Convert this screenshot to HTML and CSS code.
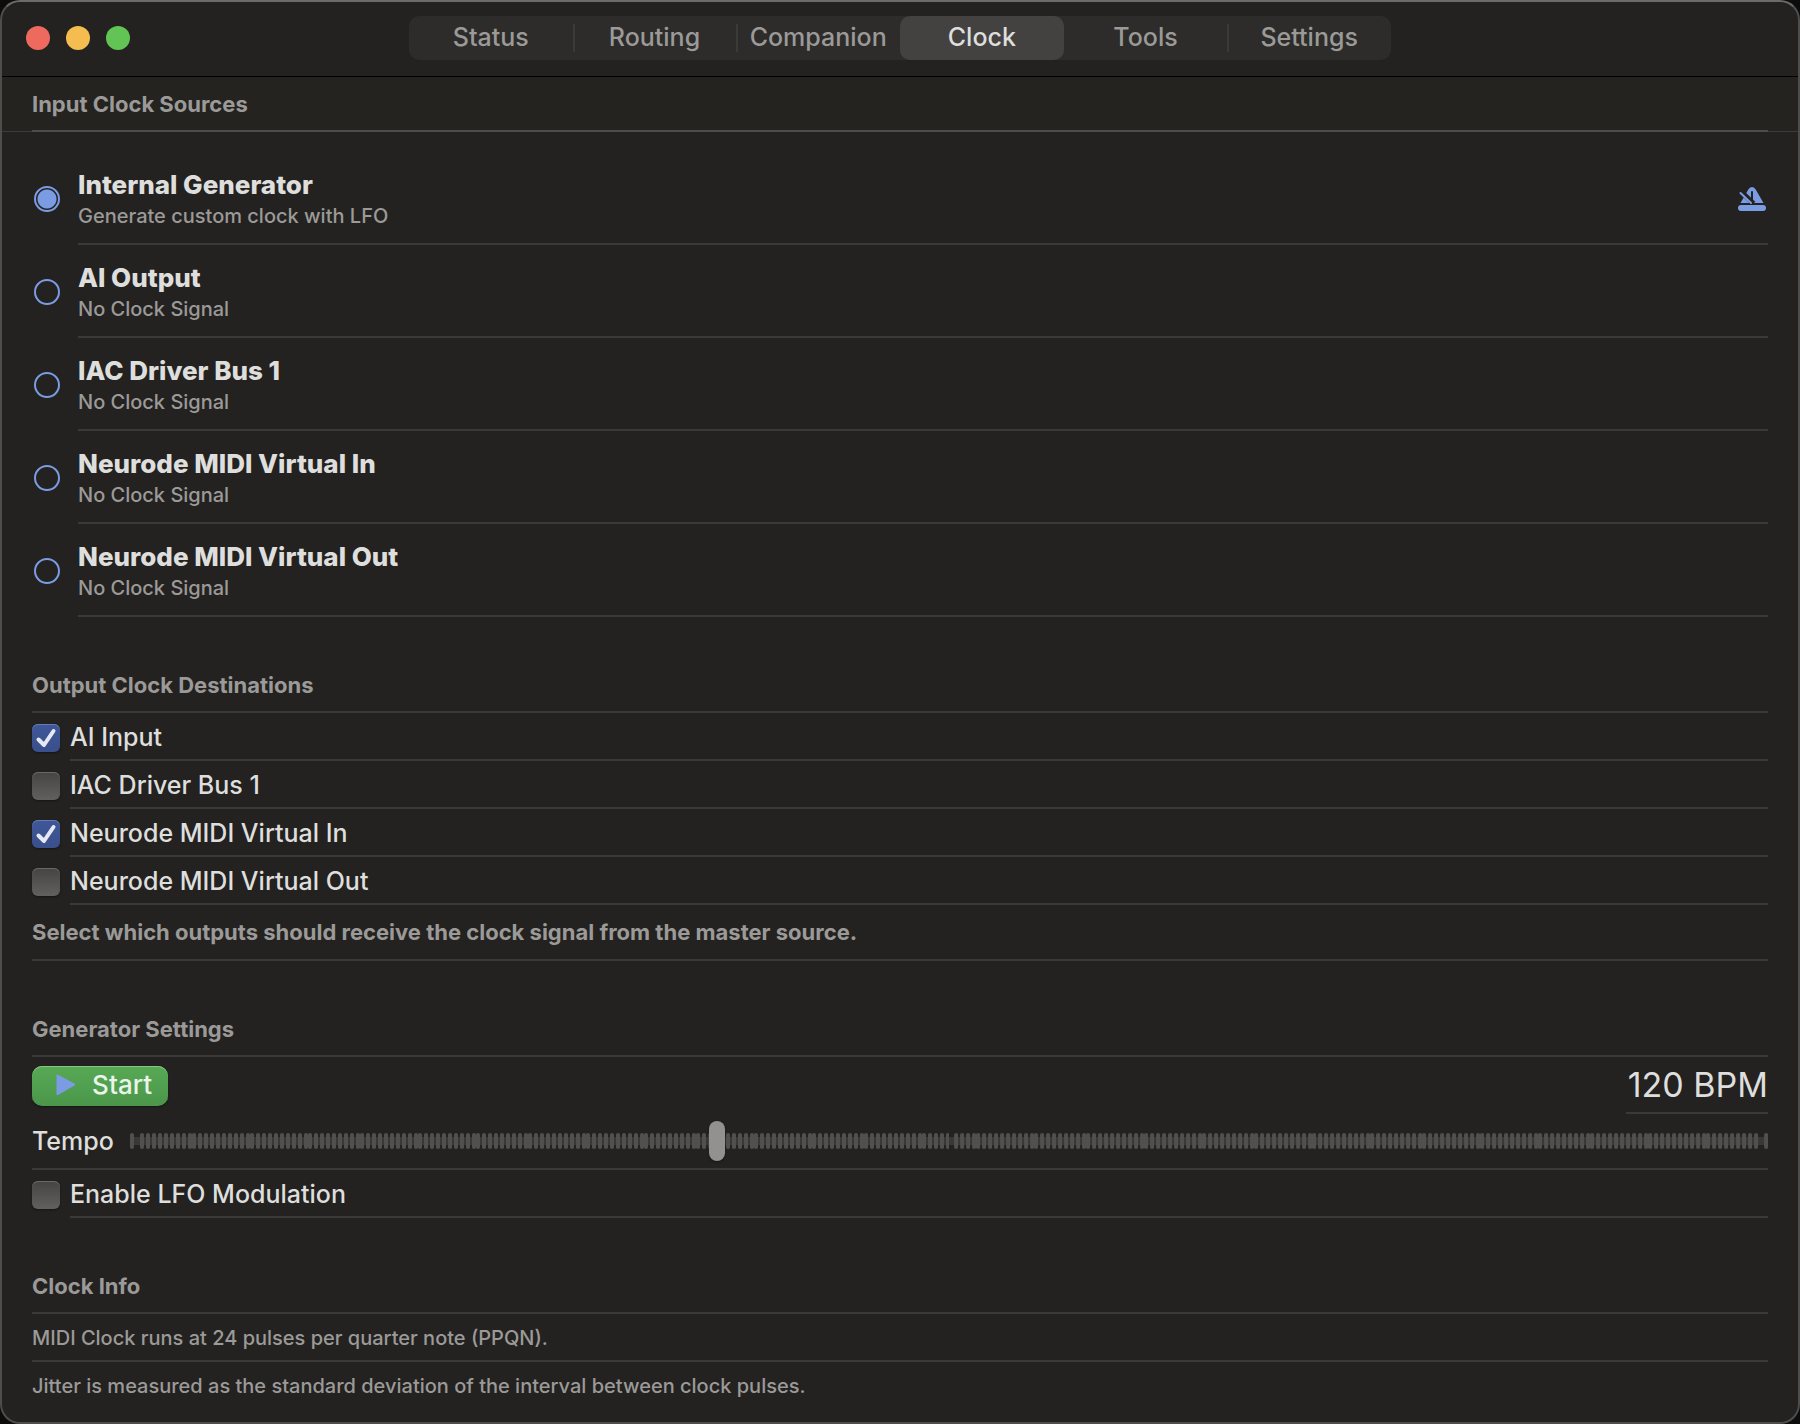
FILE: index.html
```html
<!DOCTYPE html>
<html lang="en">
<head>
<meta charset="utf-8">
<title>Clock</title>
<link rel="stylesheet" href="styles.css">
</head>
<body>
<div class="window">
  <header class="titlebar">
    <div class="lights">
      <button class="light close" aria-label="Close"></button>
      <button class="light minimize" aria-label="Minimize"></button>
      <button class="light expand" aria-label="Zoom"></button>
    </div>
    <nav class="tabs">
      <button class="tab">Status</button>
      <button class="tab divided">Routing</button>
      <button class="tab divided">Companion</button>
      <button class="tab selected" aria-current="page">Clock</button>
      <button class="tab">Tools</button>
      <button class="tab divided">Settings</button>
    </nav>
  </header>

  <main>
    <section>
      <div class="pinned"><h2 class="heading">Input Clock Sources</h2></div>
      <div class="sources">
        <div class="source">
          <input type="radio" name="source" id="src-gen" class="radio" checked>
          <div class="source-body">
            <label for="src-gen"><span class="name">Internal Generator</span><span class="detail">Generate custom clock with LFO</span></label>
            <svg class="metronome" viewBox="0 0 28 26" aria-hidden="true">
              <path d="M2.500 17 L10 4 Q11.500 1 14 1 Q16.500 1 18 4 L25.500 17 Z"/>
              <path class="cut slit" d="M14 6 V17"/>
              <path class="cut" d="M1 3.500 L15.500 17.500"/>
              <path class="stroke" d="M2.500 7 L13 17"/>
              <rect x="0" y="19" width="28" height="6" rx="3"/>
            </svg>
          </div>
        </div>
        <div class="source">
          <input type="radio" name="source" id="src-ai" class="radio">
          <div class="source-body"><label for="src-ai"><span class="name">AI Output</span><span class="detail">No Clock Signal</span></label></div>
        </div>
        <div class="source">
          <input type="radio" name="source" id="src-iac" class="radio">
          <div class="source-body"><label for="src-iac"><span class="name">IAC Driver Bus 1</span><span class="detail">No Clock Signal</span></label></div>
        </div>
        <div class="source">
          <input type="radio" name="source" id="src-in" class="radio">
          <div class="source-body"><label for="src-in"><span class="name">Neurode MIDI Virtual In</span><span class="detail">No Clock Signal</span></label></div>
        </div>
        <div class="source">
          <input type="radio" name="source" id="src-out" class="radio">
          <div class="source-body"><label for="src-out"><span class="name">Neurode MIDI Virtual Out</span><span class="detail">No Clock Signal</span></label></div>
        </div>
      </div>
    </section>

    <section class="group">
      <h2 class="heading">Output Clock Destinations</h2>
      <div class="check-row">
        <span class="check"><input type="checkbox" id="dst-ai" checked><svg viewBox="0 0 28 28" aria-hidden="true"><path d="M6.500 15.500 L12 21 L21.500 7"/></svg></span>
        <label for="dst-ai">AI Input</label>
      </div>
      <div class="check-row">
        <span class="check"><input type="checkbox" id="dst-iac"></span>
        <label for="dst-iac">IAC Driver Bus 1</label>
      </div>
      <div class="check-row">
        <span class="check"><input type="checkbox" id="dst-in" checked><svg viewBox="0 0 28 28" aria-hidden="true"><path d="M6.500 15.500 L12 21 L21.500 7"/></svg></span>
        <label for="dst-in">Neurode MIDI Virtual In</label>
      </div>
      <div class="check-row">
        <span class="check"><input type="checkbox" id="dst-out"></span>
        <label for="dst-out">Neurode MIDI Virtual Out</label>
      </div>
      <p class="note">Select which outputs should receive the clock signal from the master source.</p>
    </section>

    <section class="group">
      <h2 class="heading">Generator Settings</h2>
      <div class="transport">
        <button class="start">
          <svg viewBox="0 0 20 22" aria-hidden="true"><path d="M1.500 0.500 L18.500 9.500 Q20 10.500 18.500 11.500 L2 21 Q0.500 21.500 0.500 20 V1.500 Q0.500 0 1.500 0.500 Z"/></svg>
          <span>Start</span>
        </button>
        <output class="bpm" for="tempo">120 BPM</output>
      </div>
      <div class="tempo">
        <label for="tempo">Tempo</label>
        <div class="slider">
          <div class="ticks" aria-hidden="true">
            <svg class="half">
              <defs>
                <pattern id="tick-marks" x="58" y="0" width="168" height="16" patternUnits="userSpaceOnUse">
                  <path class="tick" d="M2 2v12M6 2v12M12 2v12M18 2v12M24 2v12M30 2v12M36 2v12M42 2v12M48 2v12M54 2v12M60 2v12M64 2v12M70 2v12M76 2v12M82 2v12M88 2v12M94 2v12M100 2v12M106 2v12M112 2v12M118 2v12M122 2v12M128 2v12M134 2v12M140 2v12M146 2v12M152 2v12M158 2v12M164 2v12"/>
                </pattern>
              </defs>
              <path class="tick" d="M2 2v12"/>
              <rect class="marks" x="10" width="100%" height="16" fill="url(#tick-marks)"/>
            </svg>
            <svg class="half mirrored">
              <path class="tick" d="M2 2v12"/>
              <rect class="marks short" x="10" height="16" fill="url(#tick-marks)"/>
            </svg>
          </div>
          <input type="range" id="tempo" min="20" max="300" value="120">
        </div>
      </div>
      <div class="check-row">
        <span class="check"><input type="checkbox" id="lfo"></span>
        <label for="lfo">Enable LFO Modulation</label>
      </div>
    </section>

    <section class="group">
      <h2 class="heading">Clock Info</h2>
      <p class="info">MIDI Clock runs at 24 pulses per quarter note (PPQN).</p>
      <p class="info">Jitter is measured as the standard deviation of the interval between clock pulses.</p>
    </section>
  </main>
</div>
</body>
</html>
```
FILE: styles.css
```css
:root {
  --bg: #232220;
  --line: #3a3937;
  --text: #dededd;
  --muted: #9b9a98;
  --accent: #7b9ce3;
}

* { box-sizing: border-box; }

body {
  margin: 0;
  background: #0c0c0c;
  color: var(--text);
  font: 450 25px/32px Inter, "Liberation Sans", sans-serif;
}

h2, p { margin: 0; }
button, input { font: inherit; margin: 0; }

.window {
  min-height: 100vh;
  padding-bottom: 12px;
  background: var(--bg);
  border: 2px solid #4e4d4c;
  border-top-color: #6c6b6a;
  border-radius: 20px;
  overflow: hidden;
}

.titlebar {
  display: grid;
  grid-template-columns: 1fr minmax(0, 982px) 1fr;
  align-items: center;
  height: 75px;
  padding: 0 24px 2px;
  border-bottom: 1px solid #000;
}

.lights { display: flex; gap: 16px; }
.light {
  width: 24px;
  height: 24px;
  padding: 0;
  border: 0;
  border-radius: 50%;
}
.close { background: #ee6a5f; }
.minimize { background: #f5bd4f; }
.expand { background: #61c454; }

.tabs {
  display: grid;
  grid-template-columns: repeat(6, 1fr);
  height: 44px;
  border-radius: 10px;
  background: #2d2c2a;
}
.tab {
  display: flex;
  align-items: center;
  justify-content: center;
  padding: 0 0 2px;
  border: 0;
  background: none;
  color: var(--muted);
}
.divided {
  background: linear-gradient(#3b3a38, #3b3a38) left center / 2px 28px no-repeat;
}
.selected {
  border-radius: 10px;
  background: #434240;
  color: var(--text);
}

.pinned {
  padding: 0 30px;
  background: #24231f;
  box-shadow: inset 0 -1px #3c3b37;
}
.heading {
  height: 55px;
  border-bottom: 2px solid var(--line);
  color: var(--muted);
  font-size: 22px;
  font-weight: 700;
  line-height: 54px;
}
.pinned .heading { border-color: #4d4c49; }

.sources { padding: 20px 30px 0; }
.source {
  display: flex;
  align-items: center;
  gap: 18px;
  padding-left: 2px;
}
.source-body {
  flex: 1;
  display: flex;
  align-items: center;
  justify-content: space-between;
  height: 93px;
  padding: 2px 2px 0 0;
  border-bottom: 2px solid var(--line);
}
.source-body label { padding-top: 2px; }
.name, .detail { display: block; }
.name { font-size: 26px; font-weight: 800; line-height: 32px; }
.detail { color: var(--muted); font-size: 20px; font-weight: 500; line-height: 30px; }
.metronome { width: 28px; height: 26px; fill: var(--accent); }
.metronome .stroke { fill: none; stroke: var(--accent); stroke-width: 2; stroke-linecap: round; }
.metronome .cut { fill: none; stroke: var(--bg); stroke-width: 5; }
.metronome .slit { stroke-width: 2; stroke-linecap: round; }

.radio {
  appearance: none;
  width: 26px;
  height: 26px;
  border: 2px solid var(--accent);
  border-radius: 50%;
}
.radio:checked {
  background: radial-gradient(circle, var(--accent) 9px, transparent 10px);
}

.group { padding: 41px 30px 0; }

.check-row { display: flex; gap: 10px; height: 48px; }
.check-row label {
  flex: 1;
  border-bottom: 2px solid var(--line);
  line-height: 48px;
}
.check { display: grid; width: 28px; height: 28px; margin-top: 11px; }
.check > * { grid-area: 1 / 1; }
.check input {
  appearance: none;
  width: 28px;
  height: 28px;
  border-radius: 6px;
  background: linear-gradient(#454442, #61605e);
  box-shadow: inset 0 1px #6a6967, 0 1px 2px #151514;
}
.check input:checked {
  background: linear-gradient(#3f5798, #3a508c);
  box-shadow: inset 0 1px #667bb5, 0 1px 2px #151514;
}
.check svg {
  fill: none;
  stroke: #e6e9f3;
  stroke-width: 4;
  stroke-linecap: round;
  stroke-linejoin: round;
  pointer-events: none;
}

.note {
  height: 56px;
  border-bottom: 2px solid var(--line);
  color: var(--muted);
  font-size: 22px;
  font-weight: 700;
  line-height: 54px;
}

.transport {
  display: flex;
  align-items: flex-start;
  justify-content: space-between;
  height: 57px;
}
.start {
  display: flex;
  align-items: center;
  justify-content: space-between;
  width: 136px;
  height: 40px;
  margin-top: 9px;
  padding: 0 16px 2px 24px;
  border: 0;
  border-radius: 10px;
  background: linear-gradient(#57a955, #4b964a);
  box-shadow: inset 0 1px #8ac588, 0 1px 2px #151514;
  color: #eaf4ea;
  font-size: 26px;
}
.start svg { width: 20px; height: 22px; fill: var(--accent); }
.bpm {
  height: 57px;
  padding-left: 2px;
  border-bottom: 2px solid var(--line);
  font-size: 34px;
  font-weight: 400;
  line-height: 56px;
}

.tempo {
  display: flex;
  align-items: center;
  gap: 16px;
  height: 56px;
  border-bottom: 2px solid var(--line);
}
.slider { flex: 1; display: grid; align-items: center; }
.slider > * { grid-area: 1 / 1; }
.ticks {
  display: flex;
  height: 16px;
  background: linear-gradient(#393836, #393836) center / 100% 8px no-repeat;
}
.half { flex: 1; min-width: 0; height: 16px; }
.mirrored { transform: scaleX(-1); }
.marks.short { width: calc(100% - 14px); }
.tick { fill: none; stroke: #51504e; stroke-width: 4; stroke-linecap: round; }

.slider input {
  appearance: none;
  width: 100%;
  height: 40px;
  background: none;
}
.slider input::-webkit-slider-thumb {
  appearance: none;
  width: 16px;
  height: 40px;
  border-radius: 8px;
  background: #929190;
  box-shadow: 0 1px 2px #151514;
}

.info {
  height: 48px;
  border-bottom: 2px solid var(--line);
  color: var(--muted);
  font-size: 20px;
  font-weight: 500;
  line-height: 48px;
}
.info:last-child { border-bottom: 0; }
```
